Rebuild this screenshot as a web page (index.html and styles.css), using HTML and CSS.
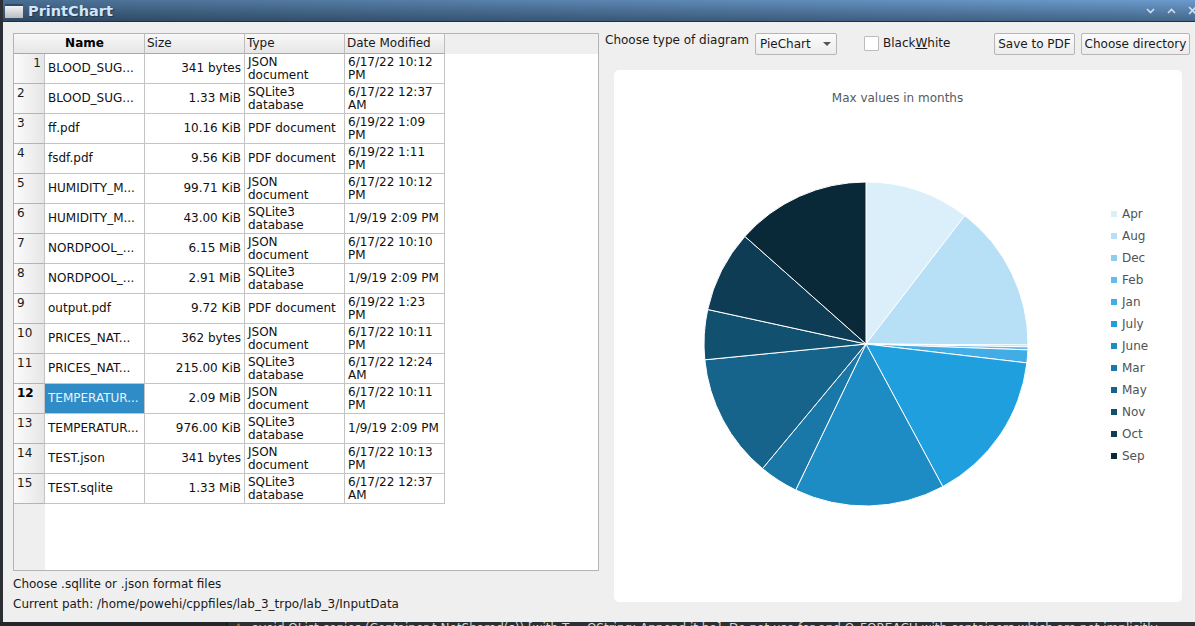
FILE: index.html
```html
<!DOCTYPE html>
<html lang="en">
<head>
    <meta charset="UTF-8">
    <title>PrintChart</title>
    <link rel="stylesheet" href="styles.css">
</head>
<body>
    <div class="window">
        <div class="titlebar">
            <span class="app-icon"></span>
            <span class="app-title">PrintChart</span>
            <span class="win-buttons">
                <svg width="9" height="6" viewBox="0 0 9 6"><path d="M1 1l3.5 3.5L8 1" class="win-stroke"/></svg>
                <svg width="9" height="6" viewBox="0 0 9 6"><path d="M1 5l3.5-3.5L8 5" class="win-stroke"/></svg>
                <svg width="9" height="9" viewBox="0 0 9 9"><path d="M1 1l7 7M8 1l-7 7" class="win-stroke"/></svg>
            </span>
        </div>

        <div class="content">
            <!-- File list -->
            <div class="left-pane">
                <div class="table-frame">
                    <div class="file-table">
                        <div class="hd hd-name">Name</div>
                        <div class="hd">Size</div>
                        <div class="hd">Type</div>
                        <div class="hd">Date Modified</div>

                        <div class="rownum first">1</div>
                        <div class="cell">BLOOD_SUG...</div>
                        <div class="cell size">341 bytes</div>
                        <div class="cell">JSON document</div>
                        <div class="cell">6/17/22 10:12 PM</div>

                        <div class="rownum">2</div>
                        <div class="cell">BLOOD_SUG...</div>
                        <div class="cell size">1.33 MiB</div>
                        <div class="cell">SQLite3 database</div>
                        <div class="cell">6/17/22 12:37 AM</div>

                        <div class="rownum">3</div>
                        <div class="cell">ff.pdf</div>
                        <div class="cell size">10.16 KiB</div>
                        <div class="cell">PDF document</div>
                        <div class="cell">6/19/22 1:09 PM</div>

                        <div class="rownum">4</div>
                        <div class="cell">fsdf.pdf</div>
                        <div class="cell size">9.56 KiB</div>
                        <div class="cell">PDF document</div>
                        <div class="cell">6/19/22 1:11 PM</div>

                        <div class="rownum">5</div>
                        <div class="cell">HUMIDITY_M...</div>
                        <div class="cell size">99.71 KiB</div>
                        <div class="cell">JSON document</div>
                        <div class="cell">6/17/22 10:12 PM</div>

                        <div class="rownum">6</div>
                        <div class="cell">HUMIDITY_M...</div>
                        <div class="cell size">43.00 KiB</div>
                        <div class="cell">SQLite3 database</div>
                        <div class="cell">1/9/19 2:09 PM</div>

                        <div class="rownum">7</div>
                        <div class="cell">NORDPOOL_...</div>
                        <div class="cell size">6.15 MiB</div>
                        <div class="cell">JSON document</div>
                        <div class="cell">6/17/22 10:10 PM</div>

                        <div class="rownum">8</div>
                        <div class="cell">NORDPOOL_...</div>
                        <div class="cell size">2.91 MiB</div>
                        <div class="cell">SQLite3 database</div>
                        <div class="cell">1/9/19 2:09 PM</div>

                        <div class="rownum">9</div>
                        <div class="cell">output.pdf</div>
                        <div class="cell size">9.72 KiB</div>
                        <div class="cell">PDF document</div>
                        <div class="cell">6/19/22 1:23 PM</div>

                        <div class="rownum">10</div>
                        <div class="cell">PRICES_NAT...</div>
                        <div class="cell size">362 bytes</div>
                        <div class="cell">JSON document</div>
                        <div class="cell">6/17/22 10:11 PM</div>

                        <div class="rownum">11</div>
                        <div class="cell">PRICES_NAT...</div>
                        <div class="cell size">215.00 KiB</div>
                        <div class="cell">SQLite3 database</div>
                        <div class="cell">6/17/22 12:24 AM</div>

                        <div class="rownum current">12</div>
                        <div class="cell selected">TEMPERATUR...</div>
                        <div class="cell size">2.09 MiB</div>
                        <div class="cell">JSON document</div>
                        <div class="cell">6/17/22 10:11 PM</div>

                        <div class="rownum">13</div>
                        <div class="cell">TEMPERATUR...</div>
                        <div class="cell size">976.00 KiB</div>
                        <div class="cell">SQLite3 database</div>
                        <div class="cell">1/9/19 2:09 PM</div>

                        <div class="rownum">14</div>
                        <div class="cell">TEST.json</div>
                        <div class="cell size">341 bytes</div>
                        <div class="cell">JSON document</div>
                        <div class="cell">6/17/22 10:13 PM</div>

                        <div class="rownum">15</div>
                        <div class="cell">TEST.sqlite</div>
                        <div class="cell size">1.33 MiB</div>
                        <div class="cell">SQLite3 database</div>
                        <div class="cell">6/17/22 12:37 AM</div>
                    </div>
                </div>
                <div class="hint">Choose .sqllite or .json format files</div>
                <div class="path">Current path: /home/powehi/cppfiles/lab_3_trpo/lab_3/InputData</div>
            </div>

            <!-- Chart side -->
            <div class="right-pane">
                <div class="toolbar">
                    <span class="type-label">Choose type of diagram</span>
                    <span class="combo">PieChart<span class="combo-arrow"></span></span>
                    <label class="check"><span class="check-box"></span><span>Black<u>W</u>hite</span></label>
                    <span class="btn save-btn">Save to PDF</span>
                    <span class="btn dir-btn">Choose directory</span>
                </div>
                <div class="chart-card">
                    <div class="chart-title">Max values in months</div>
                    <div class="chart-body">
                        <svg class="pie" width="330" height="330" viewBox="-165 -165 330 330">
                            <g stroke="#fff" stroke-width="1">
                                <path fill="#dbeffa" d="M0 0L0-162A162 162 0 0 1 98.8-128.4Z"/>
                                <path fill="#b7dff5" d="M0 0L98.8-128.4A162 162 0 0 1 162 1.1Z"/>
                                <path fill="#8fcdf0" d="M0 0L162 1.1A162 162 0 0 1 162 2.8Z"/>
                                <path fill="#65bbeb" d="M0 0L162 2.8A162 162 0 0 1 161.9 5.9Z"/>
                                <path fill="#42ace5" d="M0 0L161.9 5.9A162 162 0 0 1 160.9 18.9Z"/>
                                <path fill="#209fdf" d="M0 0L160.9 18.9A162 162 0 0 1 76.8 142.6Z"/>
                                <path fill="#1d8cc4" d="M0 0L76.8 142.6A162 162 0 0 1 -70.3 146Z"/>
                                <path fill="#1a78a8" d="M0 0L-70.3 146A162 162 0 0 1 -103.5 124.6Z"/>
                                <path fill="#16648c" d="M0 0L-103.5 124.6A162 162 0 0 1 -161.2 15.8Z"/>
                                <path fill="#125070" d="M0 0L-161.2 15.8A162 162 0 0 1 -158.3-34.5Z"/>
                                <path fill="#0d3c54" d="M0 0L-158.3-34.5A162 162 0 0 1 -121.1-107.6Z"/>
                                <path fill="#092838" d="M0 0L-121.1-107.6A162 162 0 0 1 0-162Z"/>
                            </g>
                        </svg>
                        <ul class="legend">
                            <li><i class="c1"></i>Apr</li>
                            <li><i class="c2"></i>Aug</li>
                            <li><i class="c3"></i>Dec</li>
                            <li><i class="c4"></i>Feb</li>
                            <li><i class="c5"></i>Jan</li>
                            <li><i class="c6"></i>July</li>
                            <li><i class="c7"></i>June</li>
                            <li><i class="c8"></i>Mar</li>
                            <li><i class="c9"></i>May</li>
                            <li><i class="c10"></i>Nov</li>
                            <li><i class="c11"></i>Oct</li>
                            <li><i class="c12"></i>Sep</li>
                        </ul>
                    </div>
                </div>
            </div>
        </div>
    </div>
    <div class="behind">
        <span class="warn-icon">&#9888;</span><span>avoid QList copies (Container t.NotShared(s)) [with T = QString; Append it be]. Do not use for and Q_FOREACH with containers which are not implicitly</span>
    </div>
</body>
</html>
```

FILE: styles.css
```css
html, body {
    margin: 0;
    padding: 0;
    height: 100%;
}

body {
    width: 1195px;
    height: 626px;
    overflow: hidden;
    background: #2b2f33;
    font-family: "DejaVu Sans", sans-serif;
    font-size: 12px;
    color: #1a1a1a;
    display: flex;
    flex-direction: column;
}

.window {
    margin-left: 3px;
    height: 622px;
    flex: none;
    background: #efefef;
    display: flex;
    flex-direction: column;
}

/* Title bar */
.titlebar {
    height: 21px;
    flex: none;
    display: flex;
    align-items: center;
    padding-left: 2px;
    background: linear-gradient(rgba(255, 255, 255, 0.04), rgba(0, 0, 0, 0.32)), linear-gradient(90deg, #43698f, #6597cb);
    border-bottom: 1px solid #1d3146;
}

.app-icon {
    width: 18px;
    height: 14px;
    background: linear-gradient(#f2f2f2, #b9bdc2);
    border-top: 2px solid #2c4a6c;
    box-sizing: border-box;
    margin-right: 5px;
}

.app-title {
    font-weight: bold;
    font-size: 14.5px;
    color: #cfe6fb;
    text-shadow: 1px 1px 1px #24384f;
}

.win-buttons {
    margin-left: auto;
    display: flex;
    align-items: center;
    gap: 12px;
    margin-right: -2px;
}

.win-stroke {
    fill: none;
    stroke: #d5dde6;
    stroke-width: 1.6;
}

.content {
    flex: 1;
    display: flex;
    padding: 11px 5px 0 10px;
    min-height: 0;
}

/* Left side: table */
.left-pane {
    width: 586px;
    flex: none;
    display: flex;
    flex-direction: column;
}

.table-frame {
    width: 586px;
    height: 538px;
    box-sizing: border-box;
    border: 1px solid #b4b4b4;
    background-color: #fff;
    background-image: linear-gradient(#efefef, #efefef), linear-gradient(#efefef, #efefef);
    background-size: 31px 100%, 100% 20px;
    background-repeat: no-repeat;
}

.file-table {
    display: grid;
    grid-template-columns: 31px repeat(4, 100px);
    grid-template-rows: 20px repeat(15, 30px);
    width: 431px;
    line-height: 13px;
}

.hd {
    background: linear-gradient(#f8f8f8, #e6e6e6);
    border-right: 1px solid #bdbdbd;
    border-bottom: 1px solid #a9a9a9;
    padding: 2px 0 0 2px;
    line-height: 15px;
    box-sizing: border-box;
    white-space: nowrap;
    overflow: hidden;
}

.hd-name {
    grid-column: span 2;
    font-weight: bold;
    text-align: center;
    color: #000;
    padding-left: 11px;
}

.rownum {
    background: linear-gradient(90deg, #fbfbfb, #e6e6e6);
    border-right: 1px solid #c4c4c4;
    border-bottom: 1px solid #b4b4b4;
    padding: 3px 0 0 3px;
    box-sizing: border-box;
}

.rownum.first {
    text-align: right;
    padding-right: 3px;
}

.rownum.current {
    font-weight: bold;
    color: #000;
}

.cell {
    border-right: 1px solid #c4c4c4;
    border-bottom: 1px solid #c4c4c4;
    padding: 0 3px;
    box-sizing: border-box;
    display: flex;
    align-items: center;
    background: #fff;
    overflow: hidden;
    color: #111;
}

.cell.size {
    justify-content: flex-end;
}

.cell.selected {
    background: #308cc6;
    color: #e8f3fa;
}

.hint {
    margin-top: 6px;
    line-height: 15px;
}

.path {
    margin-top: 5px;
    line-height: 15px;
}

/* Right side: toolbar + chart */
.right-pane {
    flex: 1;
    min-width: 0;
    margin-left: 6px;
    display: flex;
    flex-direction: column;
}

.toolbar {
    display: flex;
    align-items: flex-start;
    height: 37px;
    flex: none;
    white-space: nowrap;
}

.type-label {
    line-height: 15px;
    width: 150px;
}

.combo {
    width: 82px;
    height: 22px;
    box-sizing: border-box;
    border: 1px solid #b5b5b5;
    border-radius: 2px;
    background: linear-gradient(#fbfbfb, #ececec);
    padding-left: 4px;
    display: flex;
    align-items: center;
}

.combo-arrow {
    width: 0;
    height: 0;
    border-left: 4px solid transparent;
    border-right: 4px solid transparent;
    border-top: 4px solid #555;
    margin-left: auto;
    margin-right: 5px;
}

.check {
    display: flex;
    align-items: center;
    gap: 4px;
    height: 20px;
    margin-left: 27px;
}

.check-box {
    width: 13px;
    height: 13px;
    border: 1px solid #bcbcbc;
    border-radius: 1px;
    background: #fff;
}

.btn {
    height: 22px;
    box-sizing: border-box;
    border: 1px solid #b5b5b5;
    border-radius: 2px;
    background: linear-gradient(#fbfbfb, #ececec);
    display: flex;
    align-items: center;
    justify-content: center;
}

.save-btn {
    width: 81px;
    margin-left: auto;
}

.dir-btn {
    width: 109px;
    margin-left: 6px;
}

.chart-card {
    flex: none;
    width: 568px;
    height: 532px;
    margin-left: 9px;
    background: #fff;
    border-radius: 5px;
    display: flex;
    flex-direction: column;
}

.chart-title {
    text-align: center;
    color: #555a60;
    line-height: 15px;
    margin-top: 21px;
    padding-right: 1px;
}

.chart-body {
    display: flex;
    align-items: center;
    padding-left: 87px;
    margin-top: 73px;
}

.legend {
    list-style: none;
    margin: 0 0 18px 0;
    padding: 0 0 0 80px;
    color: #4e5359;
}

.legend li {
    height: 22px;
    display: flex;
    align-items: center;
    gap: 5px;
}

.legend i {
    width: 6px;
    height: 6px;
    display: block;
    flex: none;
}

.c1 { background: #dbeffa; }
.c2 { background: #b7dff5; }
.c3 { background: #8fcdf0; }
.c4 { background: #65bbeb; }
.c5 { background: #42ace5; }
.c6 { background: #209fdf; }
.c7 { background: #1d8cc4; }
.c8 { background: #1a78a8; }
.c9 { background: #16648c; }
.c10 { background: #125070; }
.c11 { background: #0d3c54; }
.c12 { background: #092838; }

/* What shows behind the window at the bottom */
.behind {
    flex: 1;
    overflow: hidden;
    background: #2b3034;
    margin-left: 227px;
    border-left: 1px solid #14171a;
    padding-left: 5px;
    color: #d8d8d8;
    white-space: nowrap;
    line-height: 12px;
    box-shadow: -227px 0 0 #23272b;
}

.warn-icon {
    color: #e8b93a;
    margin-right: 8px;
}
```
